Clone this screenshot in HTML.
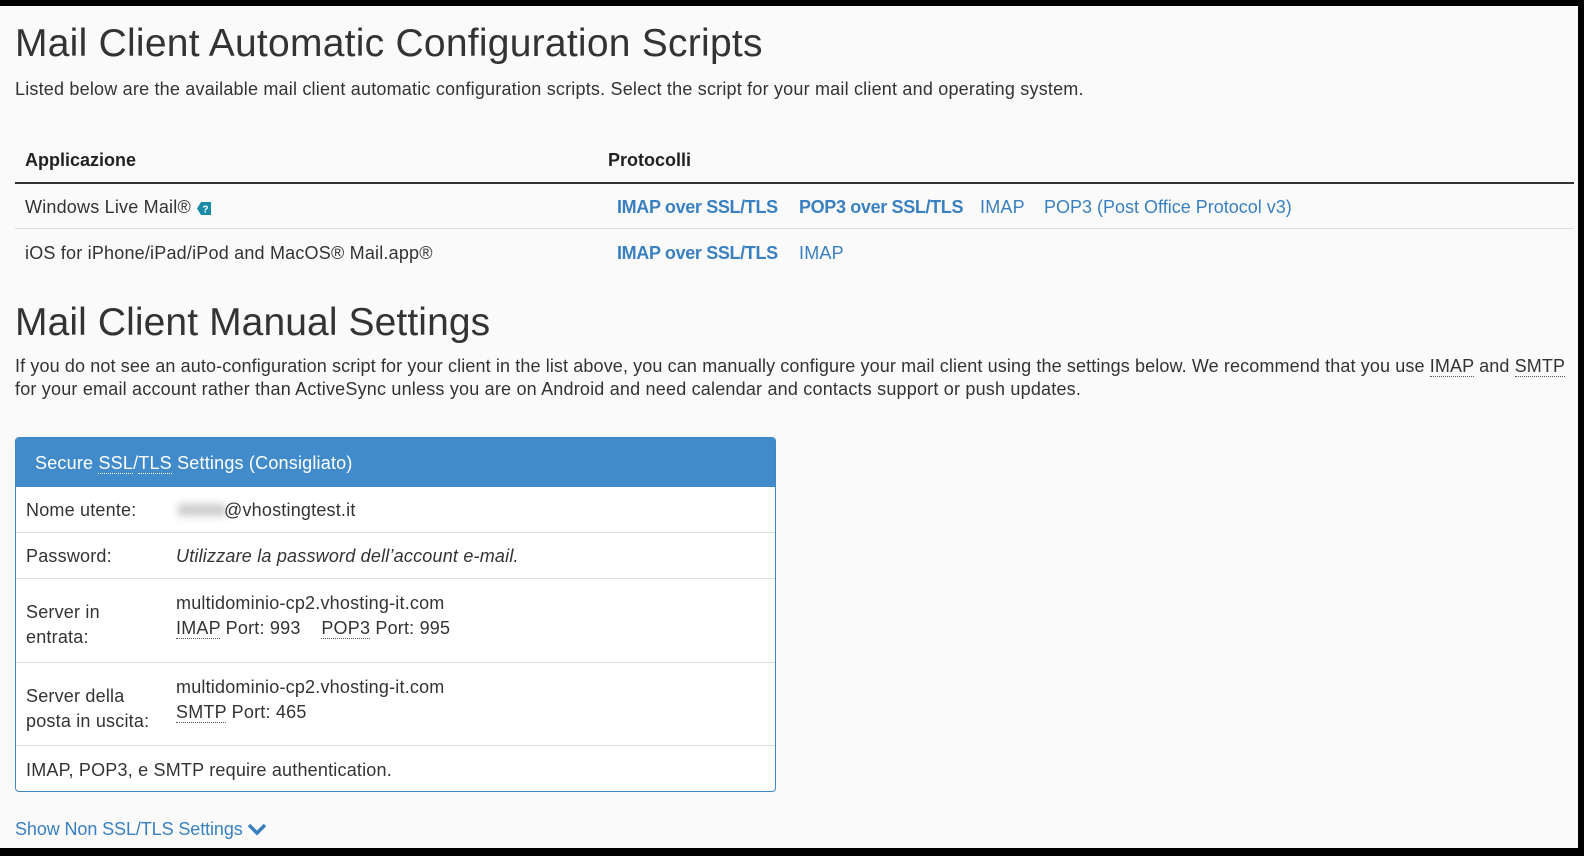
<!DOCTYPE html>
<html><head><meta charset="utf-8"><style>
html,body{margin:0;padding:0;}
body{width:1584px;height:856px;background:#000;position:relative;overflow:hidden;font-family:"Liberation Sans",sans-serif;color:#333;}
#pg{position:absolute;left:0;top:6px;width:1578px;height:842px;background:#fafafa;}
.a{position:absolute;white-space:nowrap;line-height:1;}
h1{position:absolute;margin:0;font-weight:normal;font-size:39px;letter-spacing:0.1px;color:#333;white-space:nowrap;line-height:1;}
.t{font-size:18px;letter-spacing:0.2px;}
.lk{color:#3a80c0;}
.b{font-weight:bold;letter-spacing:0;}
.lk.b{letter-spacing:-0.35px;}
.hl{position:absolute;left:15px;width:1559px;}
abbr{text-decoration:none;border-bottom:1px dotted #555;}
.box{position:absolute;left:15px;top:431px;width:759px;height:353px;border:1px solid #3d87c5;border-radius:4px;background:#fff;overflow:hidden;}
.bh{position:absolute;left:0;top:0;width:100%;height:49px;background:#428bca;}
.sep{position:absolute;left:0;width:100%;height:1px;background:#ddd;}
</style></head><body>
<div id="pg">
<h1 style="left:15px;top:18px;letter-spacing:0.25px;">Mail Client Automatic Configuration Scripts</h1>
<div class="a t" style="left:15px;top:74px;">Listed below are the available mail client automatic configuration scripts. Select the script for your mail client and operating system.</div>

<div class="a t b" style="left:25px;top:145px;color:#222;">Applicazione</div>
<div class="a t b" style="left:608px;top:145px;color:#222;">Protocolli</div>
<div class="hl" style="top:176px;height:2px;background:#333;"></div>
<div class="a t" style="left:25px;top:192px;">Windows Live Mail® <svg width="16" height="16" viewBox="0 0 16 16" style="vertical-align:-3px"><path d="M5 2h10v13H5L1 8.5z" fill="#1b8aa6"/><text x="9.5" y="12.5" font-size="10" font-weight="bold" fill="#fff" text-anchor="middle" font-family="Liberation Sans">?</text></svg></div>
<div class="a t b lk" style="left:617px;top:192px;">IMAP over SSL/TLS</div>
<div class="a t b lk" style="left:799px;top:192px;">POP3 over SSL/TLS</div>
<div class="a t lk" style="left:980px;top:192px;">IMAP</div>
<div class="a t lk" style="left:1044px;top:192px;letter-spacing:0;">POP3 (Post Office Protocol v3)</div>
<div class="hl" style="top:222px;height:1px;background:#ddd;"></div>
<div class="a t" style="left:25px;top:238px;">iOS for iPhone/iPad/iPod and MacOS® Mail.app®</div>
<div class="a t b lk" style="left:617px;top:238px;">IMAP over SSL/TLS</div>
<div class="a t lk" style="left:799px;top:238px;">IMAP</div>

<h1 style="left:15px;top:297px;">Mail Client Manual Settings</h1>
<div class="a t" style="left:15px;top:351px;letter-spacing:0.12px;">If you do not see an auto-configuration script for your client in the list above, you can manually configure your mail client using the settings below. We recommend that you use <abbr>IMAP</abbr> and <abbr>SMTP</abbr></div>
<div class="a t" style="left:15px;top:374px;">for your email account rather than ActiveSync unless you are on Android and need calendar and contacts support or push updates.</div>

<div class="box">
<div class="bh"></div>
<div class="a t" style="left:19px;top:16px;color:#fff;">Secure <abbr style="border-color:#fff">SSL</abbr>/<abbr style="border-color:#fff">TLS</abbr> Settings (Consigliato)</div>
<div class="a t" style="left:10px;top:63px;">Nome utente:</div>
<div class="a" style="left:162px;top:66px;width:48px;height:12px;background:#ccc;filter:blur(4px);"></div>
<div class="a t" style="left:208px;top:63px;">@vhostingtest.it</div>
<div class="sep" style="top:94px;"></div>
<div class="a t" style="left:10px;top:109px;">Password:</div>
<div class="a t" style="left:160px;top:109px;font-style:italic;">Utilizzare la password dell’account e-mail.</div>
<div class="sep" style="top:140px;"></div>
<div class="a t" style="left:10px;top:162px;line-height:25px;white-space:normal;width:120px;">Server in entrata:</div>
<div class="a t" style="left:160px;top:156px;">multidominio-cp2.vhosting-it.com</div>
<div class="a t" style="left:160px;top:181px;"><abbr>IMAP</abbr> Port: 993 &nbsp;&nbsp; <abbr>POP3</abbr> Port: 995</div>
<div class="sep" style="top:224px;"></div>
<div class="a t" style="left:10px;top:246px;line-height:25px;white-space:normal;width:130px;">Server della posta in uscita:</div>
<div class="a t" style="left:160px;top:240px;">multidominio-cp2.vhosting-it.com</div>
<div class="a t" style="left:160px;top:265px;"><abbr>SMTP</abbr> Port: 465</div>
<div class="sep" style="top:307px;"></div>
<div class="a t" style="left:10px;top:323px;">IMAP, POP3, e SMTP require authentication.</div>
</div>

<div class="a t lk" style="left:15px;top:814px;letter-spacing:-0.1px;">Show Non SSL/TLS Settings<svg width="22" height="14" viewBox="0 0 20 14" style="vertical-align:-1px;margin-left:3px"><path d="M2 3l8 8 8-8" fill="none" stroke="#3a80c0" stroke-width="3.5"/></svg></div>
</div>
</body></html>
